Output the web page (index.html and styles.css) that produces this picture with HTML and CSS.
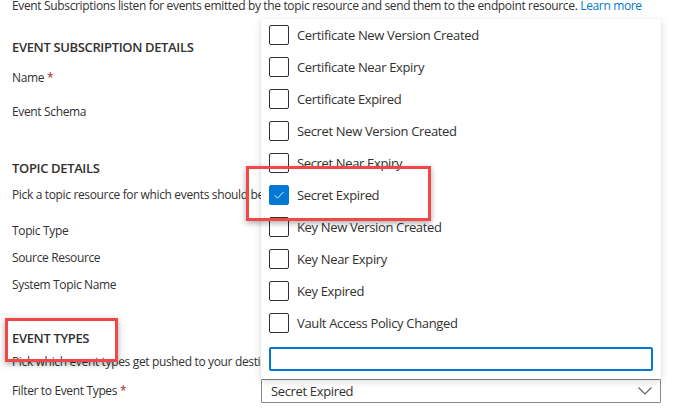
FILE: index.html
```html
<!DOCTYPE html>
<html>
<head>
<meta charset="utf-8">
<link rel="stylesheet" href="styles.css">
</head>
<body>
<div class="page">
  <p class="intro">Event Subscriptions listen for events emitted by the topic resource and send them to the endpoint resource. <a class="link" href="#">Learn more</a></p>

  <h2 class="section s1">EVENT SUBSCRIPTION DETAILS</h2>
  <div class="label l-name">Name <span class="req">*</span></div>
  <div class="label l-schema">Event Schema</div>

  <h2 class="section s2">TOPIC DETAILS</h2>
  <div class="desc d1">Pick a topic resource for which events should be pushed to your destination.</div>
  <div class="label l-type">Topic Type</div>
  <div class="label l-tight">Source Resource</div>
  <div class="label l-tight">System Topic Name</div>

  <h2 class="section s3">EVENT TYPES</h2>
  <div class="desc d2">Pick which event types get pushed to your destination.</div>

  <div class="field-row">
    <div class="field-label">Filter to Event Types <span class="req">*</span></div>
    <div class="field">
      <div class="select">
        <span class="select-text">Secret Expired</span>
        <svg class="chevron" width="14" height="8" viewBox="0 0 14 8"><path d="M0.5 0.5 L7 7 L13.5 0.5" fill="none" stroke="#605e5c" stroke-width="1.1"/></svg>
      </div>
      <div class="menu">
        <div class="opt"><span class="cb"></span><span class="opt-text">Certificate New Version Created</span></div>
        <div class="opt"><span class="cb"></span><span class="opt-text">Certificate Near Expiry</span></div>
        <div class="opt"><span class="cb"></span><span class="opt-text">Certificate Expired</span></div>
        <div class="opt"><span class="cb"></span><span class="opt-text">Secret New Version Created</span></div>
        <div class="opt"><span class="cb"></span><span class="opt-text">Secret Near Expiry</span></div>
        <div class="opt"><span class="cb checked"><svg width="12" height="10" viewBox="0 0 12 10"><path d="M1.5 5.2 L4.5 8.2 L10.5 2" fill="none" stroke="#fff" stroke-width="0.9"/></svg></span><span class="opt-text">Secret Expired</span></div>
        <div class="opt"><span class="cb"></span><span class="opt-text">Key New Version Created</span></div>
        <div class="opt"><span class="cb"></span><span class="opt-text">Key Near Expiry</span></div>
        <div class="opt"><span class="cb"></span><span class="opt-text">Key Expired</span></div>
        <div class="opt"><span class="cb"></span><span class="opt-text">Vault Access Policy Changed</span></div>
        <div class="search"></div>
      </div>
    </div>
  </div>

  <div class="mark mark1"></div>
  <div class="mark mark2"></div>
</div>
</body>
</html>
```

FILE: styles.css
```css
* { box-sizing: border-box; }
html, body { margin: 0; padding: 0; background: #fff; }
body {
  font-family: "Open Sans", "Noto Sans", sans-serif;
  color: #323130;
  font-size: 12px;
  letter-spacing: -0.35px;
  overflow: hidden;
  width: 679px;
  height: 419px;
}
.page {
  position: relative;
  padding-left: 12px;
  height: 419px;
}
.intro {
  margin: -1px 0 0 0;
  line-height: 14px;
  white-space: nowrap;
  font-size: 12px;
}
.link { color: #0078d4; text-decoration: none; }
.section {
  margin: 0;
  font-size: 13px;
  font-weight: 600;
  line-height: 20px;
}
.s1 { margin-top: 24px; }
.s2 { margin-top: 36px; }
.s3 { margin-top: 33px; }
.label, .desc {
  line-height: 20px;
  font-size: 12px;
  white-space: nowrap;
}
.l-name { margin-top: 11px; }
.l-schema { margin-top: 14px; }
.d1 { margin-top: 7px; }
.l-type { margin-top: 16px; }
.l-tight { margin-top: 7px; }
.d2 { margin-top: 4px; }
.req { color: #a4262c; }

.field-row {
  display: flex;
  align-items: center;
  margin-top: 7px;
}
.field-label {
  width: 249px;
  font-size: 12px;
  line-height: 20px;
}
.field {
  position: relative;
  width: 400px;
}
.select {
  height: 24px;
  border: 1px solid #8a8886;
  border-radius: 1px;
  display: flex;
  align-items: center;
  justify-content: space-between;
  padding: 0 8px 0 9px;
  font-size: 13px;
}
.chevron { display: block; }

.menu {
  position: absolute;
  left: 0;
  bottom: 100%;
  width: 400px;
  background: #fff;
  border-radius: 2px;
  box-shadow: 0 3px 8px rgba(0,0,0,0.13), 0 0 3px rgba(0,0,0,0.08);
  padding: 0 8px 8px 8px;
}
.opt {
  height: 32px;
  display: flex;
  align-items: center;
  gap: 8px;
  font-size: 13px;
}
.cb {
  width: 20px;
  height: 20px;
  border: 1px solid #323130;
  border-radius: 2px;
  display: flex;
  align-items: center;
  justify-content: center;
  flex: none;
}
.cb.checked {
  background: #0078d4;
  border-color: #0078d4;
}
.cb svg { display: block; }
.search {
  margin-top: 8px;
  height: 24px;
  border: 2px solid #0078d4;
  border-radius: 2px;
  width: 384px;
}

.mark {
  position: absolute;
  border: 3px solid #f04848;
  box-shadow: 0 2px 6px rgba(0,0,0,0.35);
}
.mark1 { left: 246px; top: 167px; width: 185px; height: 55px; }
.mark2 { left: 5px; top: 319px; width: 113px; height: 44px; }
```
